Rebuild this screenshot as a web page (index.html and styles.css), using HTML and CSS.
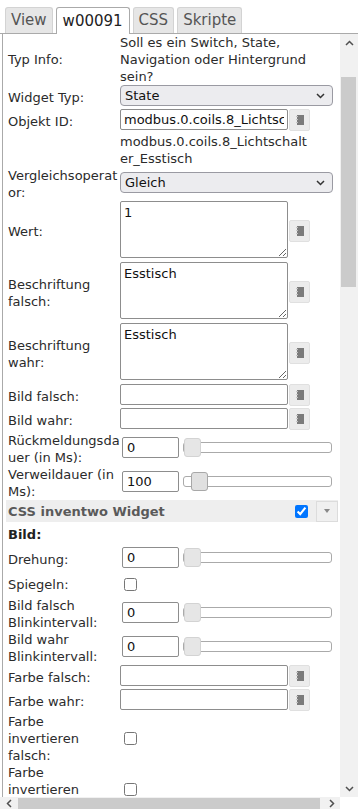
FILE: index.html
```html
<!DOCTYPE html>
<html lang="de">
<head>
  <meta charset="UTF-8" />
  <meta name="viewport" content="width=device-width, initial-scale=1.0" />
  <title>w00091 – Attribute</title>
  <link rel="stylesheet" href="styles.css">
</head>
<body>
  <div class="tabs">
    <span class="tab">View</span>
    <span class="tab active">w00091</span>
    <span class="tab">CSS</span>
    <span class="tab">Skripte</span>
  </div>

  <div class="main">
    <div class="panel">
      <div class="row">
        <div class="label">Typ Info:</div>
        <div class="info">Soll es ein Switch, State, Navigation oder Hintergrund sein?</div>
      </div>
      <div class="row">
        <div class="label">Widget Typ:</div>
        <div class="select-wrap">
          <select class="select"><option>State</option></select>
          <svg class="chevron" width="9" height="6" viewBox="0 0 9 6"><polyline points="1,1 4.5,4.5 8,1" fill="none" stroke="#333" stroke-width="1.5"/></svg>
        </div>
      </div>
      <div class="row">
        <div class="label">Objekt ID:</div>
        <div class="field">
          <input class="text" value="modbus.0.coils.8_Lichtschalter_Esstisch" />
          <button class="pick"><svg width="8" height="10" viewBox="0 0 8 10"><rect x="1" y="0" width="7" height="10" fill="#7b7b7b"/><path d="M0 1.5h2M0 4.5h2M0 7.5h2" stroke="#c4c4c4"/></svg></button>
        </div>
      </div>
      <div class="row">
        <div class="label"></div>
        <div class="info wrap">modbus.0.coils.8_Lichtschalter_Esstisch</div>
      </div>
      <div class="row">
        <div class="label">Vergleichsoperator:</div>
        <div class="select-wrap">
          <select class="select"><option>Gleich</option></select>
          <svg class="chevron" width="9" height="6" viewBox="0 0 9 6"><polyline points="1,1 4.5,4.5 8,1" fill="none" stroke="#333" stroke-width="1.5"/></svg>
        </div>
      </div>
      <div class="row">
        <div class="label">Wert:</div>
        <div class="field">
          <textarea class="area">1</textarea>
          <button class="pick"><svg width="8" height="10" viewBox="0 0 8 10"><rect x="1" y="0" width="7" height="10" fill="#7b7b7b"/><path d="M0 1.5h2M0 4.5h2M0 7.5h2" stroke="#c4c4c4"/></svg></button>
        </div>
      </div>
      <div class="row">
        <div class="label">Beschriftung falsch:</div>
        <div class="field">
          <textarea class="area">Esstisch</textarea>
          <button class="pick"><svg width="8" height="10" viewBox="0 0 8 10"><rect x="1" y="0" width="7" height="10" fill="#7b7b7b"/><path d="M0 1.5h2M0 4.5h2M0 7.5h2" stroke="#c4c4c4"/></svg></button>
        </div>
      </div>
      <div class="row">
        <div class="label">Beschriftung wahr:</div>
        <div class="field">
          <textarea class="area">Esstisch</textarea>
          <button class="pick"><svg width="8" height="10" viewBox="0 0 8 10"><rect x="1" y="0" width="7" height="10" fill="#7b7b7b"/><path d="M0 1.5h2M0 4.5h2M0 7.5h2" stroke="#c4c4c4"/></svg></button>
        </div>
      </div>
      <div class="row">
        <div class="label">Bild falsch:</div>
        <div class="field">
          <input class="text" value="" />
          <button class="pick"><svg width="8" height="10" viewBox="0 0 8 10"><rect x="1" y="0" width="7" height="10" fill="#7b7b7b"/><path d="M0 1.5h2M0 4.5h2M0 7.5h2" stroke="#c4c4c4"/></svg></button>
        </div>
      </div>
      <div class="row">
        <div class="label">Bild wahr:</div>
        <div class="field">
          <input class="text" value="" />
          <button class="pick"><svg width="8" height="10" viewBox="0 0 8 10"><rect x="1" y="0" width="7" height="10" fill="#7b7b7b"/><path d="M0 1.5h2M0 4.5h2M0 7.5h2" stroke="#c4c4c4"/></svg></button>
        </div>
      </div>
      <div class="row">
        <div class="label">Rückmeldungsdauer (in Ms):</div>
        <div class="field">
          <input class="num" value="0" />
          <div class="slider"><span class="handle" style="left: 0px"></span></div>
        </div>
      </div>
      <div class="row">
        <div class="label">Verweildauer (in Ms):</div>
        <div class="field">
          <input class="num" value="100" />
          <div class="slider"><span class="handle focus" style="left: 7px"></span></div>
        </div>
      </div>

      <div class="group">
        <span class="group-title">CSS inventwo Widget</span>
        <input type="checkbox" checked />
        <button class="group-menu"><span class="tri"></span></button>
      </div>

      <div class="sub">Bild:</div>
      <div class="row slide">
        <div class="label">Drehung:</div>
        <div class="field">
          <input class="num" value="0" />
          <div class="slider"><span class="handle" style="left: 0px"></span></div>
        </div>
      </div>
      <div class="row check">
        <div class="label">Spiegeln:</div>
        <div class="field"><input type="checkbox" /></div>
      </div>
      <div class="row">
        <div class="label">Bild falsch Blinkintervall:</div>
        <div class="field">
          <input class="num" value="0" />
          <div class="slider"><span class="handle" style="left: 0px"></span></div>
        </div>
      </div>
      <div class="row">
        <div class="label">Bild wahr Blinkintervall:</div>
        <div class="field">
          <input class="num" value="0" />
          <div class="slider"><span class="handle" style="left: 0px"></span></div>
        </div>
      </div>
      <div class="row">
        <div class="label">Farbe falsch:</div>
        <div class="field">
          <input class="text" value="" />
          <button class="pick"><svg width="8" height="10" viewBox="0 0 8 10"><rect x="1" y="0" width="7" height="10" fill="#7b7b7b"/><path d="M0 1.5h2M0 4.5h2M0 7.5h2" stroke="#c4c4c4"/></svg></button>
        </div>
      </div>
      <div class="row">
        <div class="label">Farbe wahr:</div>
        <div class="field">
          <input class="text" value="" />
          <button class="pick"><svg width="8" height="10" viewBox="0 0 8 10"><rect x="1" y="0" width="7" height="10" fill="#7b7b7b"/><path d="M0 1.5h2M0 4.5h2M0 7.5h2" stroke="#c4c4c4"/></svg></button>
        </div>
      </div>
      <div class="row">
        <div class="label">Farbe<br>invertieren<br>falsch:</div>
        <div class="field"><input type="checkbox" /></div>
      </div>
      <div class="row">
        <div class="label">Farbe<br>invertieren<br>wahr:</div>
        <div class="field"><input type="checkbox" /></div>
      </div>
    </div>

    <div class="vscroll">
      <span class="arrow"><svg width="9" height="6" viewBox="0 0 9 6"><polyline points="1,5 4.5,1.5 8,5" fill="none" stroke="#505050" stroke-width="1.5"/></svg></span>
      <span class="vthumb"></span>
      <span class="arrow down"><svg width="9" height="6" viewBox="0 0 9 6"><polyline points="1,1 4.5,4.5 8,1" fill="none" stroke="#505050" stroke-width="1.5"/></svg></span>
    </div>
    <div class="hscroll">
      <span class="arrow"><svg width="6" height="9" viewBox="0 0 6 9"><polyline points="5,1 1.5,4.5 5,8" fill="none" stroke="#505050" stroke-width="1.5"/></svg></span>
      <span class="hthumb"></span>
      <span class="arrow"><svg width="6" height="9" viewBox="0 0 6 9"><polyline points="1,1 4.5,4.5 1,8" fill="none" stroke="#505050" stroke-width="1.5"/></svg></span>
    </div>
    <div class="corner"></div>
  </div>
</body>
</html>
```

FILE: styles.css
```css
body {
  margin: 0;
  height: 809px;
  overflow: hidden;
  font-family: "DejaVu Sans", Verdana, sans-serif;
  font-size: 13px;
  color: #2b2b2b;
  background: #fff;
}

/* tabs */
.tabs {
  display: flex;
  align-items: flex-end;
  gap: 3px;
  height: 26px;
  padding: 7px 0 0 5px;
  border-bottom: 1px solid #aaa;
}
.tab {
  padding: 0 5px;
  line-height: 25px;
  font-size: 15px;
  color: #555;
  background: #e6e6e6;
  border: 1px solid #d3d3d3;
  border-bottom: none;
  border-radius: 3px 3px 0 0;
}
.tab.active {
  padding: 0 6px;
  line-height: 26px;
  margin-bottom: -1px;
  color: #222;
  background: #fff;
  border-color: #aaa;
}

/* layout */
.main {
  display: grid;
  grid-template-columns: 1fr 18px;
  grid-template-rows: 763px 17px;
}
.panel {
  margin-left: 2px;
  padding-left: 5px;
  border-left: 1px solid #aaa;
  overflow: hidden;
}
.row {
  display: grid;
  grid-template-columns: 112px 1fr;
  align-items: center;
}
.row.slide {
  min-height: 26px;
  padding-top: 1px;
}
.row.check {
  min-height: 25px;
}
.label {
  line-height: 17px;
  overflow-wrap: anywhere;
}
.info {
  width: 190px;
  line-height: 17px;
}
.info.wrap {
  overflow-wrap: anywhere;
}
.field {
  display: flex;
  align-items: center;
}

/* controls */
input, select, textarea, button {
  font-family: "DejaVu Sans", Verdana, sans-serif;
  font-size: 13px;
  color: #111;
}
.select-wrap {
  position: relative;
  width: 213px;
  margin-bottom: 3px;
}
.select {
  display: block;
  width: 100%;
  height: 21px;
  padding: 0 4px;
  appearance: none;
  background: #ececef;
  border: 1px solid #9a9aa2;
  border-radius: 4px;
}
.chevron {
  position: absolute;
  right: 8px;
  top: 8px;
}
.text {
  box-sizing: border-box;
  width: 168px;
  height: 21px;
  margin: 0 0 3px;
  padding: 0 3px;
  border: 1px solid #8d8d8d;
  border-radius: 2px;
}
.area {
  display: block;
  box-sizing: border-box;
  width: 168px;
  height: 57px;
  margin: 0 0 4px;
  padding: 3px;
  border: 1px solid #8d8d8d;
  border-radius: 2px;
}
.pick {
  display: flex;
  align-items: center;
  justify-content: center;
  width: 21px;
  height: 22px;
  margin: 0 0 2px 1px;
  padding: 0;
  background: #ececec;
  border: 1px solid #e0e0e0;
  border-radius: 2px;
}
.num {
  box-sizing: border-box;
  width: 57px;
  height: 21px;
  margin: 0 0 3px 2px;
  padding: 0 4px;
  border: 1px solid #8d8d8d;
  border-radius: 2px;
}
.slider {
  position: relative;
  box-sizing: border-box;
  width: 149px;
  height: 11px;
  margin: 0 0 3px 4px;
  background: #fff;
  border: 1px solid #aaa;
  border-radius: 3px;
}
.handle {
  position: absolute;
  top: -5px;
  box-sizing: border-box;
  width: 17px;
  height: 19px;
  background: #e6e6e6;
  border: 1px solid #d3d3d3;
  border-radius: 3px;
}
.handle.focus {
  background: #e0e0e0;
  border-color: #a8a8a8;
}
input[type="checkbox"] {
  width: 13px;
  height: 13px;
  margin: 3px 3px 3px 4px;
}

/* group header */
.group {
  display: flex;
  align-items: center;
  height: 22px;
  margin: 0 2px 0 -2px;
  padding-left: 2px;
  background: #eeeeee;
}
.group-title {
  flex: 1;
  font-weight: bold;
  color: #5a5a5a;
}
.group-menu {
  display: flex;
  align-items: center;
  justify-content: center;
  width: 22px;
  height: 21px;
  margin-left: 5px;
  padding: 0;
  background: #f0f0f0;
  border: 1px solid #dcdcdc;
}
.tri {
  border-left: 3px solid transparent;
  border-right: 3px solid transparent;
  border-top: 4px solid #888;
}
.sub {
  height: 23px;
  line-height: 25px;
  font-weight: bold;
  color: #222;
}

/* fake scrollbars */
.vscroll {
  display: flex;
  flex-direction: column;
  background: #f1f1f1;
}
.vscroll .arrow {
  display: flex;
  align-items: center;
  justify-content: center;
  height: 17px;
}
.vscroll .down {
  margin-top: auto;
}
.vthumb {
  height: 210px;
  margin: 26px 2px 0 1px;
  background: #cbcbcb;
}
.hscroll {
  display: flex;
  align-items: flex-start;
  background: #f1f1f1;
}
.hscroll .arrow {
  display: flex;
  align-items: center;
  justify-content: center;
  width: 17px;
  height: 13px;
}
.hthumb {
  flex: 1;
  height: 15px;
  margin: 1px 3px 0 1px;
  background: #cbcbcb;
}
.corner {
  background: #fff;
}
```
